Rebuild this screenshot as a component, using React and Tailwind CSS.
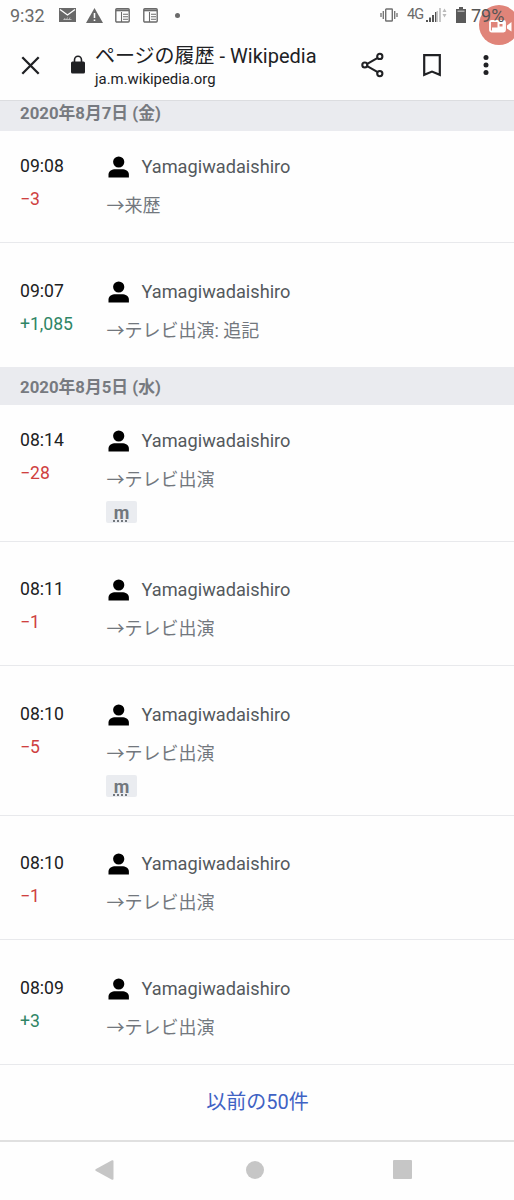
import React from "react";

const history = [
  {
    date: "2020年8月7日 (金)",
    edits: [
      { time: "09:08", diff: "−3", comment: "来歴", height: "h-[112px] pt-[19px] border-b" },
      { time: "09:07", diff: "+1,085", comment: "テレビ出演: 追記", height: "h-[124px] pt-[32px]" },
    ],
  },
  {
    date: "2020年8月5日 (水)",
    edits: [
      { time: "08:14", diff: "−28", comment: "テレビ出演", minor: true, height: "h-[137px] pt-[19px] border-b" },
      { time: "08:11", diff: "−1", comment: "テレビ出演", height: "h-[124px] pt-[31px] border-b" },
      { time: "08:10", diff: "−5", comment: "テレビ出演", minor: true, height: "h-[150px] pt-[32px] border-b" },
      { time: "08:10", diff: "−1", comment: "テレビ出演", height: "h-[124px] pt-[31px] border-b" },
      { time: "08:09", diff: "+3", comment: "テレビ出演", height: "h-[125px] pt-[32px] border-b" },
    ],
  },
];

function NewsIcon() {
  return (
    <svg width="15" height="15" viewBox="0 0 15 15" fill="none" stroke="#6a6a6a">
      <rect x="0.8" y="0.8" width="13.4" height="13.2" rx="1" strokeWidth="1.4" />
      <path d="M1 2.4h13" strokeWidth="1.8" />
      <path d="M6.5 4v10M8 6.3h5M8 8.8h5M8 11.3h5" strokeWidth="1.1" />
    </svg>
  );
}

function StatusBar() {
  return (
    <div className="relative flex h-[30px] items-center text-[#6a6a6a]">
      <span className="ml-[10px] w-[49px] pt-px text-[18px] leading-[30px]">9:32</span>
      <svg width="17" height="14" viewBox="0 0 17 14">
        <path d="M0 0h17v14H0z" fill="#696969" />
        <path d="M1 1.5l7.5 5.5 7.5-5.5" fill="none" stroke="#fff" strokeWidth="1.3" />
        <path d="M5 12l1-2M7.5 12l1-2.5M10 12l1-2.5M4.5 11.5h8" stroke="#ccc" strokeWidth="0.8" />
      </svg>
      <svg className="ml-[10px]" width="17" height="15" viewBox="0 0 17 15">
        <path d="M8.5 0L17 15H0z" fill="#696969" />
        <path d="M8.5 5v5M8.5 11.5v1.6" stroke="#fff" strokeWidth="1.6" />
      </svg>
      <div className="ml-[12px] flex gap-[13px]">
        <NewsIcon />
        <NewsIcon />
      </div>
      <span className="ml-[17px] size-[5px] rounded-full bg-[#6a6a6a]"></span>
      <div className="absolute -right-[5px] top-[5px] size-[40px] rounded-full bg-[#e08479]">
        <svg className="absolute left-[10px] top-[15px]" width="24" height="13" viewBox="0 0 24 13">
          <rect x="1" y="1" width="15" height="10.5" rx="1.5" fill="none" stroke="#fff" strokeWidth="1.8" />
          <path d="M8.5 2h7v9h-7z" fill="#fff" />
          <path d="M10.5 4h3v2.5h-3z" fill="#e08479" />
          <path d="M3 7.5h6V11H3z" fill="#fff" />
          <path d="M18 5.5l4.5-3.5v9.5L18 8.5z" fill="#fff" />
        </svg>
      </div>
      <div className="absolute left-[380px] top-0 flex h-[30px] items-center">
        <svg width="18" height="14" viewBox="0 0 18 14" fill="none" stroke="#707070">
          <rect x="5.7" y="1" width="6.6" height="12" rx="0.6" strokeWidth="1.4" />
          <path d="M3.3 3v8M14.7 3v8" strokeWidth="1.3" />
          <path d="M1 5v4M17 5v4" strokeWidth="1.3" />
        </svg>
        <span className="ml-[9px] w-[18px] text-[14.5px] tracking-[-0.8px]">4G</span>
        <svg width="22" height="16" viewBox="0 0 22 16">
          <path d="M1 15v-2h2v2zM4 15v-4.5h2V15zM7 15V8h2v7zM10 15V5h1.5v10z" fill="#555" />
          <path d="M11.5 15V4H13v11zM14 15V1h2v14z" fill="#c8c8c8" />
          <path d="M17.5 5l2-3.5 2 3.5zM17.5 7l2 3.5 2-3.5z" fill="#bbb" />
        </svg>
        <svg className="ml-[9px]" width="10" height="16" viewBox="0 0 10 16">
          <path d="M3 0h4v2h3v14H0V2h3z" fill="#5a5a5a" />
          <path d="M1.5 3.5h7V5h-7z" fill="#aaa" />
        </svg>
        <span className="ml-[5px] pt-px text-[18px] text-[#555]">79%</span>
      </div>
    </div>
  );
}

function BrowserBar() {
  return (
    <div className="flex h-[70px] text-[#202124]">
      <svg className="ml-[21px] mt-[26px] shrink-0" width="19" height="19" viewBox="0 0 19 19">
        <path d="M1.3 1.3l16.4 16.4M17.7 1.3L1.3 17.7" stroke="currentColor" strokeWidth="2.3" />
      </svg>
      <svg className="ml-[31px] mt-[25px] shrink-0" width="14" height="19" viewBox="0 0 14 19">
        <path d="M3.5 8V5a3.5 3.7 0 0 1 7 0v3" fill="none" stroke="currentColor" strokeWidth="1.6" />
        <rect y="6.5" width="14" height="12" rx="1.5" fill="currentColor" />
      </svg>
      <div className="ml-[10px] mt-[12px] w-[266px] shrink-0 whitespace-nowrap">
        <div className="h-[28px] text-[20px] leading-[28px]">ページの履歴 - Wikipedia</div>
        <div className="h-[18px] text-[14.9px] leading-[18px]">ja.m.wikipedia.org</div>
      </div>
      <svg className="mt-[22px] shrink-0" width="24" height="26" viewBox="0 0 24 26" fill="none" stroke="currentColor" strokeWidth="2.1">
        <path d="M6.2 11.8l10.5-6M6.2 14.2l10.5 6" />
        <circle cx="3.8" cy="13" r="2.5" />
        <circle cx="18.8" cy="4.4" r="2.6" />
        <circle cx="18.8" cy="21.6" r="2.6" />
      </svg>
      <svg className="ml-[38px] mt-[24px] shrink-0" width="18" height="23" viewBox="0 0 18 23">
        <path d="M1.2 1.2h15.6v19.6L9 17.6l-7.8 3.2z" fill="none" stroke="currentColor" strokeWidth="2.2" />
      </svg>
      <svg className="ml-[42px] mt-[25px] shrink-0" width="6" height="20" viewBox="0 0 6 20" fill="currentColor">
        <circle cx="3" cy="2.5" r="2.5" />
        <circle cx="3" cy="10" r="2.5" />
        <circle cx="3" cy="17.5" r="2.5" />
      </svg>
    </div>
  );
}

function Edit({ edit }) {
  return (
    <li className={`flex border-[#e8e9ec] pl-[20px] ${edit.height}`}>
      <div className="w-[86px] shrink-0 text-[17.6px] leading-[33px]">
        <p className="text-[#202122]">{edit.time}</p>
        <p className={edit.diff.startsWith("+") ? "text-[#2f8565]" : "text-[#cf4040]"}>
          {edit.diff}
        </p>
      </div>
      <div className="text-[18px]">
        <div className="flex h-[35px] items-center">
          <svg className="ml-[2px] -mt-[1px] shrink-0" width="22" height="22" viewBox="0 0 22 22">
            <circle cx="10.7" cy="6" r="5.6" />
            <path d="M0.5 21.5v-3c0-3.5 3.5-5.2 7-5.2h6.4c3.5 0 7 1.7 7 5.2v3z" />
          </svg>
          <span className="ml-[11.5px] -mt-px text-[18.2px] text-[#54595d]">Yamagiwadaishiro</span>
        </div>
        <p className="mt-[3px] h-[37px] pl-[0.5px] leading-[36px] text-[#72777d]">→{edit.comment}</p>
        {edit.minor && (
          <span className="mt-[2px] flex h-[22px] w-[31px] items-center justify-center rounded-[2px] bg-[#eaecf0] font-bold text-[#72777d]">
            <abbr title="細部の編集" className="underline decoration-dotted decoration-[1.5px] underline-offset-2">m</abbr>
          </span>
        )}
      </div>
    </li>
  );
}

export default function App() {
  return (
    <div className="h-[1200px] w-[514px] overflow-hidden bg-[#fefefe] font-['Roboto','Noto_Sans_CJK_JP',sans-serif]">
      <StatusBar />
      <BrowserBar />
      {history.map((group, i) => (
        <section key={group.date}>
          <h2
            className={
              i === 0
                ? "h-[31px] border-t border-[#dcdde0] bg-[#eaebef] pl-[20px] text-[16.8px] leading-[25px] font-bold text-[#777a80]"
                : "h-[38px] bg-[#eaebef] pl-[20px] text-[16.8px] leading-[41px] font-bold text-[#777a80]"
            }
          >
            {group.date}
          </h2>
          <ul>
            {group.edits.map((edit, j) => (
              <Edit key={j} edit={edit} />
            ))}
          </ul>
        </section>
      ))}
      <div className="h-[75px] pl-px text-center text-[20px] leading-[75px] text-[#3f62c4]">以前の50件</div>
      <div className="flex h-[57px] items-center border-t-2 border-[#e0e0e0] text-[#c6c6c6]">
        <svg className="ml-[95px]" width="19" height="20" viewBox="0 0 19 20" fill="currentColor">
          <path d="M1 9L17 0.3Q18.5 0 18.5 1v18q0 1-1.5 0.7L1 11q-1.5-1 0-2z" />
        </svg>
        <span className="ml-[132px] size-[18px] rounded-full bg-current"></span>
        <span className="ml-[129px] size-[19px] rounded-[1px] bg-current"></span>
      </div>
    </div>
  );
}
